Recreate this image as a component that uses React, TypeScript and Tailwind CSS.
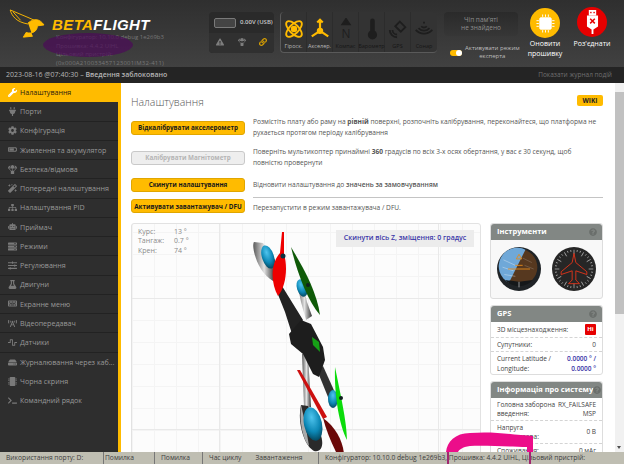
import React from "react";
import { FaWrench, FaPlug, FaCog, FaParachuteBox, FaMagic, FaSitemap, FaRobot, FaServer, FaSlidersH, FaFlask, FaKeyboard, FaBroadcastTower, FaWaveSquare, FaHdd, FaMicrochip, FaTerminal, FaBatteryThreeQuarters, FaExclamationTriangle, FaLink, FaQuestionCircle } from "react-icons/fa";

const nav: [string, React.ComponentType<{ className?: string }>][] = [
  ["Налаштування", FaWrench],
  ["Порти", FaPlug],
  ["Конфігурація", FaCog],
  ["Живлення та акумулятор", FaBatteryThreeQuarters],
  ["Безпека/відмова", FaParachuteBox],
  ["Попередні налаштування", FaMagic],
  ["Налаштування PID", FaSitemap],
  ["Приймач", FaRobot],
  ["Режими", FaServer],
  ["Регулювання", FaSlidersH],
  ["Двигуни", FaFlask],
  ["Екранне меню", FaKeyboard],
  ["Відеопередавач", FaBroadcastTower],
  ["Датчики", FaWaveSquare],
  ["Журналювання через каб...", FaHdd],
  ["Чорна скриня", FaMicrochip],
  ["Командний рядок", FaTerminal],
];

function Sensor({ label, on, children }: { label: string; on?: boolean; children: React.ReactNode }) {
  return (
    <div className="flex w-[26px] flex-col items-center border-r border-[#2c2c2c] last:border-r-0">
      <svg viewBox="0 0 24 24" className={"mt-[6px] h-[22px] w-[22px] " + (on ? "text-[#ffbb00]" : "text-[#1e1e1e]")} fill="none" stroke="currentColor" strokeWidth="2">
        {children}
      </svg>
      <span className={"mt-[2px] whitespace-nowrap text-[5.5px] leading-[8px] " + (on ? "text-[#b9b9b9]" : "text-[#161616]")}>{label}</span>
    </div>
  );
}

function CalButton({ children, off }: { children: React.ReactNode; off?: boolean }) {
  return (
    <div className={"flex h-[14px] w-[114px] shrink-0 items-center justify-center rounded-[3px] border text-[6.3px] font-bold whitespace-nowrap " + (off ? "border-[#c9c9c9] bg-[#eeeeee] text-[#b5b5b5]" : "border-[#e0a600] bg-[#ffbb00] text-[#1a1a1a]")}>
      {children}
    </div>
  );
}

function PanelHead({ title }: { title: string }) {
  return (
    <div className="flex h-[16px] items-center justify-between rounded-t-[3px] bg-[#828784] pl-[6px] pr-[5px]">
      <span className="whitespace-nowrap text-[7.5px] font-bold text-white">{title}</span>
      <FaQuestionCircle className="h-[8px] w-[8px] shrink-0 text-[#6a6e6b]" />
    </div>
  );
}

function Row({ left, right, rightClass }: { left: React.ReactNode; right: React.ReactNode; rightClass?: string }) {
  return (
    <div className="flex items-center justify-between border-b border-dashed border-[#d4d4d4] px-[6px] py-[2px] text-[6.5px] leading-[9px] text-[#444]">
      <span className="whitespace-nowrap">{left}</span>
      <span className={"whitespace-nowrap text-right " + (rightClass ?? "")}>{right}</span>
    </div>
  );
}

function Drone() {
  return (
    <svg viewBox="131 222 350 240" className="absolute inset-0 h-[240px] w-[350px]">
      <defs>
        <radialGradient id="mot" cx="0.5" cy="0.3" r="0.8">
          <stop offset="0" stopColor="#4fc4ee" />
          <stop offset="0.55" stopColor="#0c87b5" />
          <stop offset="1" stopColor="#02303f" />
        </radialGradient>
        <linearGradient id="arm" x1="0" y1="0" x2="1" y2="0">
          <stop offset="0" stopColor="#5b5b5b" />
          <stop offset="0.5" stopColor="#e2e2e2" />
          <stop offset="1" stopColor="#333" />
        </linearGradient>
      </defs>
      <path d="M296 280 L301 278 L306 300 L311 314 L305 318 L300 300Z" fill="url(#arm)" />
      <path d="M301 352 L307 352 L310 405 L303 405Z" fill="url(#arm)" />
      <path d="M253 240 C250 244 256 270 272 279 L274 258 L262 241Z" fill="url(#arm)" />
      <path d="M274 285 L281 284 L302 318 L292 335 L284 310Z" fill="#222" />
      <path d="M316 368 L322 364 L336 395 L329 400Z" fill="#333" />
      <path d="M288 332 L300 318 L310 322 L322 345 L324 358 L318 375 L312 372 L302 352 L290 342Z" fill="#1d1d1d" />
      <path d="M311 335 L318 340 L319 350 L312 343Z" fill="#16a016" />
      <ellipse cx="267" cy="255" rx="6" ry="12" transform="rotate(-18 267 255)" fill="url(#mot)" />
      <ellipse cx="301" cy="286" rx="5" ry="9" transform="rotate(-18 301 286)" fill="url(#mot)" />
      <ellipse cx="332" cy="397" rx="5" ry="9" fill="url(#mot)" />
      <path d="M300 403 C296 420 303 444 313 449 C322 451 323 440 319 431 L307 404Z" fill="#2a2a2a" />
      <path d="M300 403 C298 420 302 438 308 444 L304 420Z" fill="#aaa" />
      <ellipse cx="312" cy="422" rx="9" ry="17" transform="rotate(-12 312 422)" fill="url(#mot)" />
      <path d="M281 230 L283 230 L283 252 C287 265 285 285 277 294 C270 282 269 262 279 251Z" fill="#ee0000" />
      <circle cx="282" cy="254" r="2.5" fill="#0a3040" />
      <path d="M290 245 C302 265 316 290 319 313 C306 298 296 270 290 245Z" fill="#0f5a08" />
      <circle cx="307" cy="283" r="2" fill="#102020" />
      <path d="M334 365 C339 390 346 420 346 438 C339 425 333 395 334 365Z" fill="#0bdc0b" />
      <circle cx="340" cy="396" r="2" fill="#102020" />
      <path d="M296 368 L299 368 L326 415 L322 417Z" fill="#cc1010" />
      <path d="M322 416 C335 425 342 440 343 452 L336 452 C330 440 325 428 322 416Z" fill="#6a0808" />
    </svg>
  );
}

function Attitude() {
  return (
    <svg viewBox="0 0 48 48" className="h-[44px] w-[44px]">
      <circle cx="24" cy="24" r="24" fill="#1f2326" />
      <circle cx="24" cy="22" r="20" fill="#56381f" />
      <path d="M31 3 A20 20 0 0 0 13 39 Z" fill="#6fa8d8" />
      <path d="M7 14 L20 20 M6 22 L18 26 M8 30 L20 32" stroke="#fff" strokeOpacity="0.6" strokeWidth="0.6" />
      <path d="M28 12 L38 17 M30 20 L40 24" stroke="#fff" strokeOpacity="0.3" strokeWidth="0.6" />
      <path d="M12 24 H36 M20 20 H28" stroke="#e28a1c" strokeWidth="1" />
      <path d="M24 8 L21 13 H27 Z" fill="none" stroke="#e28a1c" strokeWidth="1" />
      <path d="M9 36 A20 20 0 0 0 39 36 L24 38 Z" fill="#15181a" />
      <path d="M24 38 V44" stroke="#ddd" strokeWidth="0.7" />
    </svg>
  );
}

function Heading() {
  const ticks = Array.from({ length: 36 }, (_, i) => i * 10);
  return (
    <svg viewBox="0 0 48 48" className="h-[44px] w-[44px]">
      <circle cx="24" cy="24" r="24" fill="#262626" />
      {ticks.map((a) => (
        <line key={a} x1="24" y1="3" x2="24" y2={a % 30 === 0 ? 8 : 5} stroke="#cfcfcf" strokeWidth="0.7" transform={`rotate(${a} 24 24)`} />
      ))}
      <path d="M24 7 L26 17 L38 27 L38 30 L26 26 L26 36 L30 40 H18 L22 36 L22 26 L10 30 L10 27 L22 17 Z" fill="none" stroke="#e0341a" strokeWidth="1" />
    </svg>
  );
}

const pCls = "text-[6.6px] leading-[10.5px] text-[#555]";

export default function App() {
  return (
    <div className="relative flex h-[464px] w-[624px] flex-col overflow-hidden bg-white font-['Open_Sans',sans-serif] text-[#444]">
      {/* top bar */}
      <header className="flex h-[67px] shrink-0 bg-gradient-to-b from-[#2f2f2f] to-[#414141]">
        <div className="relative w-[209px] shrink-0">
          <svg viewBox="0 0 40 32" className="absolute left-[9px] top-[9px] h-[30px] w-[38px]" fill="none" stroke="#ffbb00" strokeWidth="1">
            <path d="M1 1 L20 9 L29 13 M1 1 C3 8 8 14 20 16 M4 3 L12 12" />
            <path d="M20 15 C27 9 33 11 37 17 L30 18 C30 24 24 27 18 25 L15 30 L25 29" fill="#ffbb00" />
          </svg>
          <div className="absolute left-[52px] top-[16px] text-[15px] font-black italic leading-[18px] tracking-[0.4px] text-white" style={{ fontFamily: "'Liberation Sans',sans-serif" }}>
            <span className="text-[#ffbb00]">BETA</span>FLIGHT
          </div>
          <div className="absolute left-[56px] top-[33px] whitespace-nowrap text-[6px] leading-[8.5px] text-[#777]">
            <div>Конфігуратор: 10.10.0 debug 1e269b3</div>
            <div>Прошивка: 4.4.2 UIHL</div>
            <div>Цільовий пристрій:</div>
            <div className="tracking-[0.2px]">(0x000A210033457123001IM32-411)</div>
          </div>
        </div>
        <div className="mt-[12px] flex h-[41px] w-[65px] shrink-0 flex-col rounded-[4px] bg-[#2a2a2a]">
          <div className="flex h-[21px] items-center gap-[4px] pl-[5px]">
            <div className="h-[10px] w-[22px] rounded-[2px] border border-[#7a7a7a] bg-[#444]" />
            <span className="whitespace-nowrap text-[6px] font-semibold text-[#c8c8c8]">0.00V (USB)</span>
          </div>
          <div className="flex flex-1 items-center justify-between rounded-b-[4px] bg-[#303030] px-[7px] pb-[3px]">
            <FaExclamationTriangle className="h-[8px] w-[8px] text-[#7d7d7d]" />
            <FaParachuteBox className="h-[8px] w-[8px] text-[#7d7d7d]" />
            <FaLink className="h-[8px] w-[8px] text-[#d9a000]" />
          </div>
        </div>
        <div className="ml-[6px] mt-[12px] flex h-[41px] shrink-0 rounded-[4px] border-b border-l border-[#5a5a5a] bg-[#333333]">
          <Sensor label="Гіроск." on>
            <ellipse cx="12" cy="12" rx="11" ry="5" transform="rotate(45 12 12)" />
            <ellipse cx="12" cy="12" rx="11" ry="5" transform="rotate(-45 12 12)" />
            <circle cx="12" cy="12" r="2.5" fill="currentColor" />
          </Sensor>
          <Sensor label="Акселер." on>
            <path d="M12 2 V14 M12 14 L3 20 M12 14 L21 20 M9 5 L12 2 L15 5" strokeWidth="2.4" />
            <circle cx="12" cy="14" r="2.5" fill="currentColor" />
          </Sensor>
          <Sensor label="Компас">
            <path d="M12 1 L8 7 H16 Z" fill="currentColor" />
            <text x="12" y="22" fontSize="13" fill="currentColor" stroke="none" textAnchor="middle">N</text>
          </Sensor>
          <Sensor label="Барометр">
            <path d="M10 3 a2.5 2.5 0 0 1 5 0 V14 a5 5 0 1 1 -5 0 Z" fill="currentColor" stroke="none" />
          </Sensor>
          <Sensor label="GPS">
            <path d="M14 4 L20 10 L15 15 L9 9 Z M3 13 a8 8 0 0 0 8 8 M6 13 a5 5 0 0 0 5 5" />
          </Sensor>
          <Sensor label="Сонар">
            <path d="M3 13 A12 12 0 0 0 21 13 M6 11 A8 8 0 0 0 18 11 M9 9 A4 4 0 0 0 15 9 M12 4 V6" />
          </Sensor>
        </div>
        <div className="ml-[7px] mt-[12px] flex w-[74px] shrink-0 flex-col">
          <div className="flex h-[24px] items-center justify-center rounded-[4px] bg-gradient-to-b from-[#2a2a2a] to-[#363636] text-center text-[6.5px] leading-[8px] text-[#8d8d8d]">
            Чіп пам'яті<br />не знайдено
          </div>
          <div className="mt-[9px] flex items-center gap-[2px] pl-[6px]">
            <div className="flex h-[6px] w-[12px] shrink-0 justify-end rounded-full bg-[#ffbb00]">
              <div className="h-[6px] w-[6px] rounded-full bg-white" />
            </div>
            <span className="ml-[1px] whitespace-nowrap text-center text-[6px] leading-[7.5px] text-[#bdbdbd]">Активувати режим<br />експерта</span>
          </div>
        </div>
        <div className="ml-[8px] mt-[8px] flex w-[38px] shrink-0 flex-col items-center">
          <div className="flex h-[30px] w-[30px] items-center justify-center rounded-full bg-[#ffbb00]">
            <svg viewBox="0 0 20 20" className="h-[19px] w-[19px]" fill="none" stroke="#fff" strokeWidth="1">
              <rect x="4" y="4" width="12" height="12" rx="1" fill="#fff" />
              <path d="M7 0.5V3 M10 0.5V3 M13 0.5V3 M7 17V19.5 M10 17V19.5 M13 17V19.5 M0.5 7H3 M0.5 10H3 M0.5 13H3 M17 7H19.5 M17 10H19.5 M17 13H19.5" />
            </svg>
          </div>
          <span className="mt-[1px] whitespace-nowrap text-center text-[7px] leading-[10px] text-white">Оновити<br />прошивку</span>
        </div>
        <div className="ml-[9px] mt-[7px] flex w-[38px] shrink-0 flex-col items-center">
          <div className="flex h-[30px] w-[30px] items-center justify-center rounded-full bg-[#e60000]">
            <svg viewBox="0 0 16 26" className="h-[24px] w-[15px]">
              <rect x="4" y="0" width="8" height="6" fill="#fff" />
              <path d="M2 6 H14 V18 L9 21 V26 H7 V21 L2 18 Z" fill="#fff" />
              <path d="M5.5 9.5 L10.5 14.5 M10.5 9.5 L5.5 14.5" stroke="#e60000" strokeWidth="1.6" />
              <rect x="5.5" y="2" width="1.5" height="1.5" fill="#e60000" />
              <rect x="9" y="2" width="1.5" height="1.5" fill="#e60000" />
            </svg>
          </div>
          <span className="mt-[2px] whitespace-nowrap text-[7px] leading-[10px] text-white">Роз'єднати</span>
        </div>
      </header>
      {/* log bar */}
      <div className="flex h-[16px] shrink-0 items-center justify-between bg-[#242424] pl-[6px] pr-[12px] text-[7px]">
        <span className="text-[#b5b5b5]">
          2023-08-16 @07:40:30 – <b className="font-semibold">Введення заблоковано</b>
        </span>
        <span className="text-[6.5px] text-[#6f6f6f]">Показати журнал подій</span>
      </div>
      {/* body */}
      <div className="relative flex min-h-0 flex-1">
        <nav className="flex w-[121px] shrink-0 flex-col border-r-[3px] border-[#ffbb00] bg-[#2e2e2e]">
          {nav.map(([label, Icon], i) => (
            <div key={label} className={"flex h-[19.25px] shrink-0 items-center border-b border-[#222] pl-[8px] text-[7.1px] whitespace-nowrap " + (i === 0 ? "border-b-0 bg-[#ffbb00] text-[#2a1a10]" : i > 13 ? "border-b-0 text-[#999]" : "text-[#999]")}>
              <Icon className={"mr-[3px] h-[9px] w-[9px] shrink-0 " + (i === 0 ? "text-white" : "text-[#7a7a7a]")} />
              {label}
            </div>
          ))}
        </nav>
        <main className="relative min-w-0 flex-1 overflow-hidden pl-[10px] pr-[12px]">
          <div className="flex items-start justify-between pt-[11px]">
            <h1 className="text-[10.5px] font-light leading-[16px] text-[#555]">Налаштування</h1>
            <div className="mt-[1px] flex h-[11px] w-[26px] items-center justify-center rounded-[2px] bg-[#ffbb00] text-[6.5px] font-bold text-[#222]">WIKI</div>
          </div>
          <div className="mt-[7px] flex items-center gap-[8px]">
            <CalButton>Відкалібрувати акселерометр</CalButton>
            <p className={pCls}>Розмістіть плату або раму на <b>рівній</b> поверхні, розпочніть калібрування, переконайтеся, що платформа не рухається протягом періоду калібрування</p>
          </div>
          <div className="mt-[9px] flex items-center gap-[8px]">
            <CalButton off>Калібрувати Магнітометр</CalButton>
            <p className={pCls}>Поверніть мультикоптер принаймні <b>360</b> градусів по всіх 3-х осях обертання, у вас є 30 секунд, щоб<br />повністю провернути</p>
          </div>
          <div className="mt-[10px] flex items-center gap-[8px]">
            <CalButton>Скинути налаштування</CalButton>
            <p className={pCls}>Відновити налаштування до <span className="font-semibold">значень за замовчуванням</span></p>
          </div>
          <div className="mt-[7px] flex items-center gap-[8px]">
            <CalButton>Активувати завантажувач / DFU</CalButton>
            <p className={"-mt-[2px] flex-1 self-start border-t border-[#c4c4c4] pt-[5px] " + pCls}>Перезапустити в режим завантажувача / DFU.</p>
          </div>
          <div className="mt-[9px] flex gap-[9px]">
            <div className="relative h-[240px] w-[350px] shrink-0 rounded-[3px] border border-[#e2e2e2] bg-[#fcfcfc] bg-[linear-gradient(#e9e9e9_1px,transparent_1px),linear-gradient(90deg,#e9e9e9_1px,transparent_1px),linear-gradient(#f4f4f4_1px,transparent_1px),linear-gradient(90deg,#f4f4f4_1px,transparent_1px)] bg-[size:219px_131px,219px_131px,22px_22px,22px_22px] bg-[position:87px_74px,87px_74px,0_8px,0_8px]">
              <Drone />
              <div className="absolute left-[6px] top-[3px] grid grid-cols-[36px_auto] text-[7px] leading-[9.5px] text-[#8a8a8a]">
                <span>Курс:</span><span>13 °</span>
                <span>Тангаж:</span><span>0.7 °</span>
                <span>Крен:</span><span>74 °</span>
              </div>
              <div className="absolute right-[6px] top-[6px] flex h-[17px] w-[138px] items-center justify-center bg-[#ececec] text-[7px] font-semibold text-[#3a35a8]">
                Скинути вісь Z, зміщення: 0 градус
              </div>
            </div>
            <div className="flex w-[113px] shrink-0 flex-col gap-[6px]">
              <section className="h-[76px] rounded-[3px] border border-[#dddddd] bg-[#f8f8f8]">
                <PanelHead title="Інструменти" />
                <div className="flex justify-between px-[6px] pt-[7px]">
                  <Attitude />
                  <Heading />
                </div>
              </section>
              <section className="h-[70px] rounded-[3px] border border-[#dddddd] bg-white">
                <PanelHead title="GPS" />
                <Row left="3D місцезнаходження:" right={<span className="flex h-[11px] w-[11px] items-center justify-center rounded-[1px] bg-[#e60000] text-[6px] font-bold leading-none text-white">Ні</span>} />
                <Row left="Супутники:" right="0" />
                <div className="flex justify-between px-[6px] py-[2px] text-[6.5px] leading-[10px] text-[#444]">
                  <span>Current Latitude /<br />Longitude:</span>
                  <span className="text-right font-semibold text-[#3a35a8]">0.0000 ° /<br />0.0000 °</span>
                </div>
              </section>
              <section className="h-[100px] rounded-[3px] border border-[#dddddd] bg-white">
                <PanelHead title="Інформація про систему" />
                <Row left={<>Головна заборона<br />введення:</>} right={<>RX_FAILSAFE<br />MSP</>} />
                <Row left={<>Напруга<br />акумулятора:</>} right="0 В" />
                <Row left="Споживання:" right="0 мАг" />
              </section>
            </div>
          </div>
          {/* scribble drawn over the page */}
          <svg viewBox="121 83 503 369" className="absolute inset-0 h-[369px] w-[503px]">
            <path d="M446 452 C447 442 455 433 470 433 C495 431 515 435 533 436 L533 452 L527 452 L527 447 C510 447 485 445 470 446 C462 447 459 450 458 452 Z" fill="#ec0d8a" />
          </svg>
        </main>
        <div className="relative w-[9px] shrink-0 bg-[#f1f1f1]">
          <div className="mt-[9px] h-[222px] bg-[#c1c1c1]" />
          <div className="absolute bottom-[3px] left-[2px] h-0 w-0 border-x-[2.5px] border-t-[3px] border-x-transparent border-t-[#505050]" />
        </div>
      </div>
      {/* status bar */}
      <footer className="relative flex h-[12px] shrink-0 items-center whitespace-nowrap bg-[#bfbeb2] text-[6.7px] text-[#3d3d3d]">
        <span className="w-[103px] pl-[6px]">Використання порту: D:</span>
        <span className="flex h-full w-[51px] items-center border-l border-[#777] pl-[1px]">Помилка</span>
        <span className="flex h-full w-[48px] items-center border-l border-[#777] pl-[6px]">Помилка</span>
        <span className="flex h-full w-[116px] items-center gap-[14px] border-l border-[#777] pl-[6px]"><span>Час циклу</span><span>Завантаження</span></span>
        <span className="flex h-full items-center border-l border-[#777] pl-[6px]">Конфігуратор: 10.10.0 debug 1e269b3, Прошивка: 4.4.2 UIHL, Цільовий пристрій:</span>
        <span className="absolute left-[447px] top-0 h-[12px] w-[2px] bg-[#a0286f]" />
        <span className="absolute left-[529px] top-0 h-[12px] w-[2px] bg-[#a0286f]" />
      </footer>
      {/* purple scribble across the logo */}
      <svg viewBox="0 0 624 464" className="pointer-events-none absolute inset-0 h-[464px] w-[624px]">
        <ellipse cx="88" cy="45" rx="45" ry="12" fill="#4b0a58" fillOpacity="0.7" />
      </svg>
    </div>
  );
}
